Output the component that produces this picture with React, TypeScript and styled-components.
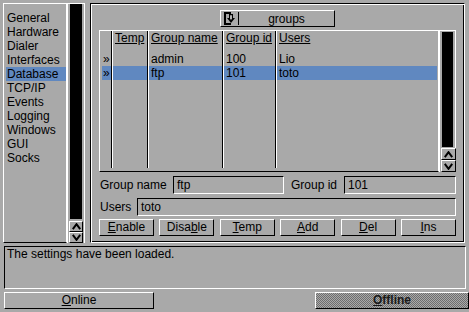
import React from "react";
import styled, { createGlobalStyle } from "styled-components";

const BG = "#a9a9a9";
const SEL = "#6088c0";

const GlobalStyle = createGlobalStyle`
  html, body { margin: 0; padding: 0; background: ${BG}; }
  body {
    font-family: "Liberation Sans", Arial, sans-serif;
    font-size: 12px;
    color: #000;
  }
  * { box-sizing: border-box; }
`;

const Screen = styled.div`
  width: 469px;
  height: 312px;
  background: ${BG};
  overflow: hidden;
  display: flex;
  flex-direction: column;
  line-height: 14px;
`;

const Top = styled.div`
  display: flex;
  height: 240px;
  margin-top: 3px;
  padding-left: 3px;
`;

/* ---- left menu ---- */
const Menu = styled.div`
  width: 64px;
  height: 240px;
  border: 1px solid #fff;
  border-bottom-color: #000;
  padding: 7px 0 0 2px;
`;

const MenuItem = styled.div<{ $active?: boolean }>`
  height: 14px;
  padding-left: 1px;
  white-space: nowrap;
  background: ${(p) => (p.$active ? SEL : "transparent")};
`;

const ScrollBar = styled.div<{ $w: number }>`
  width: ${(p) => p.$w}px;
  height: 100%;
  border: 1px solid #fff;
  border-bottom: none;
  display: flex;
  flex-direction: column;
  align-items: flex-start;
`;

const Trough = styled.div<{ $mt: number; $mb: number }>`
  flex: 1;
  width: calc(100% - 4px);
  margin: ${(p) => p.$mt}px 2px ${(p) => p.$mb}px 2px;
  background: #000;
`;

const ArrowBox = styled.div<{ $w: number; $h: number }>`
  width: ${(p) => p.$w}px;
  height: ${(p) => p.$h}px;
  margin-left: 1px;
  border: 1px solid;
  border-color: #fff #000 #000 #fff;
  display: flex;
  align-items: center;
  justify-content: center;
`;

const Chevron = ({ up }: { up?: boolean }) => (
  <svg width="9" height="7" viewBox="0 0 9 7">
    <polyline
      points={up ? "0.8,6.2 4.5,1.2 8.2,6.2" : "0.8,0.8 4.5,5.8 8.2,0.8"}
      fill="none"
      stroke="#000"
      strokeWidth="2"
    />
  </svg>
);

/* ---- right panel ---- */
const Panel = styled.div`
  width: 375px;
  height: 240px;
  margin-left: 5px;
  border: 1px solid;
  border-color: #000 #fff #fff #000;
  box-shadow: inset 1px 1px 0 #fff, inset -1px -1px 0 #000;
  padding: 6px 8px 6px 8px;
  display: flex;
  flex-direction: column;
`;

const DropButton = styled.div`
  align-self: center;
  width: 115px;
  height: 17px;
  border: 1px solid;
  border-color: #fff #000 #000 #fff;
  display: flex;
  align-items: center;
`;

const DropIcon = styled.div`
  display: flex;
  align-items: center;
  padding-left: 3px;
  padding-right: 2px;
  height: 100%;
  border-right: 1px solid #000;
  height: 13px;
`;

const DropText = styled.div`
  flex: 1;
  text-align: center;
`;

const TableArea = styled.div`
  display: flex;
  height: 142px;
  margin-top: 3px;
`;

const Table = styled.div`
  width: 340px;
  height: 100%;
  border: 1px solid #fff;
  border-bottom-color: #000;
  padding: 0 1px 3px 2px;
  display: flex;
`;

const Column = styled.div<{ $w: number; $first?: boolean; $last?: boolean }>`
  width: ${(p) => p.$w}px;
  flex: none;
  border-left: ${(p) => (p.$first ? "none" : "1px solid #fff")};
  border-right: ${(p) => (p.$last ? "none" : "1px solid #000")};
`;

const HeadCell = styled.div`
  height: 21px;
  padding-left: 2px;
  white-space: nowrap;
  text-decoration: underline;
  text-underline-offset: 1px;
`;

const Cell = styled.div<{ $sel?: boolean }>`
  height: 14px;
  padding-left: 2px;
  white-space: nowrap;
  overflow: hidden;
  background: ${(p) => (p.$sel ? SEL : "transparent")};
`;

const MarkCell = styled(Cell)`
  padding-left: 1px;
`;

const FieldRow = styled.div<{ $mt: number }>`
  display: flex;
  align-items: center;
  height: 18px;
  margin-top: ${(p) => p.$mt}px;
`;

const Label = styled.div<{ $w: number; $pl: number }>`
  width: ${(p) => p.$w}px;
  padding-left: ${(p) => p.$pl}px;
  flex: none;
  white-space: nowrap;
`;

const Field = styled.div<{ $w?: number }>`
  ${(p) => (p.$w ? `width: ${p.$w}px; flex: none;` : "flex: 1;")}
  height: 18px;
  border: 1px solid;
  border-color: #000 #fff #fff #000;
  padding-left: 3px;
  line-height: 16px;
`;

const ButtonRow = styled.div`
  display: flex;
  justify-content: space-between;
  margin-top: 3px;
`;

const Button = styled.div<{ $w: number }>`
  width: ${(p) => p.$w}px;
  height: 17px;
  border: 1px solid;
  border-color: #fff #000 #000 #fff;
  text-align: center;
  line-height: 15px;
`;

const U = styled.span`
  text-decoration: underline;
  text-underline-offset: 1px;
`;

/* ---- bottom ---- */
const Status = styled.div`
  width: 462px;
  height: 43px;
  margin: 3px 0 0 4px;
  border: 1px solid;
  border-color: #000 #fff #fff #000;
  padding-left: 2px;
`;

const BottomRow = styled.div`
  display: flex;
  justify-content: space-between;
  margin: 3px 0 0 4px;
`;

const OfflineButton = styled(Button)`
  background-color: ${BG};
  background-image: repeating-conic-gradient(#6e6e6e 0 25%, ${BG} 0 50%);
  background-size: 2px 2px;
  font-weight: bold;
  color: #1a1a1a;
`;

const menu = [
  "General",
  "Hardware",
  "Dialer",
  "Interfaces",
  "Database",
  "TCP/IP",
  "Events",
  "Logging",
  "Windows",
  "GUI",
  "Socks",
];

const rows = [
  { temp: "", name: "admin", id: "100", users: "Lio" },
  { temp: "", name: "ftp", id: "101", users: "toto" },
];
const selected = 1;

const columns: { key: "temp" | "name" | "id" | "users"; title: string; w: number }[] = [
  { key: "temp", title: "Temp", w: 36 },
  { key: "name", title: "Group name", w: 75 },
  { key: "id", title: "Group id", w: 53 },
  { key: "users", title: "Users", w: 161 },
];

const PageIcon = () => (
  <svg width="12" height="13" viewBox="0 0 12 13">
    <path d="M7 1 H1 V12 H7" fill="none" stroke="#000" strokeWidth="2" />
    <path d="M5 2 H9 V6 H11 L7 11 L3 6 H5 Z" fill="#000" />
    <path d="M6.3 3.2 H7.7 V7 L7 7.8 L6.3 7 Z" fill="#fff" />
  </svg>
);

export default function App() {
  return (
    <Screen>
      <GlobalStyle />
      <Top>
        <Menu>
          {menu.map((m) => (
            <MenuItem key={m} $active={m === "Database"}>
              {m}
            </MenuItem>
          ))}
        </Menu>
        <ScrollBar $w={18}>
          <Trough $mt={0} $mb={2} />
          <ArrowBox $w={14} $h={11}>
            <Chevron up />
          </ArrowBox>
          <ArrowBox $w={14} $h={11}>
            <Chevron />
          </ArrowBox>
        </ScrollBar>

        <Panel>
          <DropButton>
            <DropIcon>
              <PageIcon />
            </DropIcon>
            <DropText>groups</DropText>
          </DropButton>

          <TableArea>
            <Table>
              <Column $w={10} $first>
                <HeadCell />
                {rows.map((r, i) => (
                  <MarkCell key={i} $sel={i === selected}>
                    »
                  </MarkCell>
                ))}
              </Column>
              {columns.map((c, ci) => (
                <Column key={c.key} $w={c.w} $last={ci === columns.length - 1}>
                  <HeadCell>{c.title}</HeadCell>
                  {rows.map((r, i) => (
                    <Cell key={i} $sel={i === selected}>
                      {r[c.key]}
                    </Cell>
                  ))}
                </Column>
              ))}
            </Table>
            <ScrollBar $w={17}>
              <Trough $mt={1} $mb={1} />
              <ArrowBox $w={15} $h={12}>
                <Chevron up />
              </ArrowBox>
              <ArrowBox $w={15} $h={12}>
                <Chevron />
              </ArrowBox>
            </ScrollBar>
          </TableArea>

          <FieldRow $mt={4}>
            <Label $w={74} $pl={1}>Group name</Label>
            <Field $w={111}>ftp</Field>
            <Label $w={60} $pl={7}>Group id</Label>
            <Field>101</Field>
          </FieldRow>
          <FieldRow $mt={4}>
            <Label $w={38} $pl={1}>Users</Label>
            <Field>toto</Field>
          </FieldRow>

          <ButtonRow>
            <Button $w={55}><U>E</U>nable</Button>
            <Button $w={55}>Disa<U>b</U>le</Button>
            <Button $w={55}><U>T</U>emp</Button>
            <Button $w={55}><U>A</U>dd</Button>
            <Button $w={55}><U>D</U>el</Button>
            <Button $w={55}><U>I</U>ns</Button>
          </ButtonRow>
        </Panel>
      </Top>

      <Status>The settings have been loaded.</Status>

      <BottomRow>
        <Button $w={150}><U>O</U>nline</Button>
        <OfflineButton $w={154}><U>O</U>ffline</OfflineButton>
      </BottomRow>
    </Screen>
  );
}
